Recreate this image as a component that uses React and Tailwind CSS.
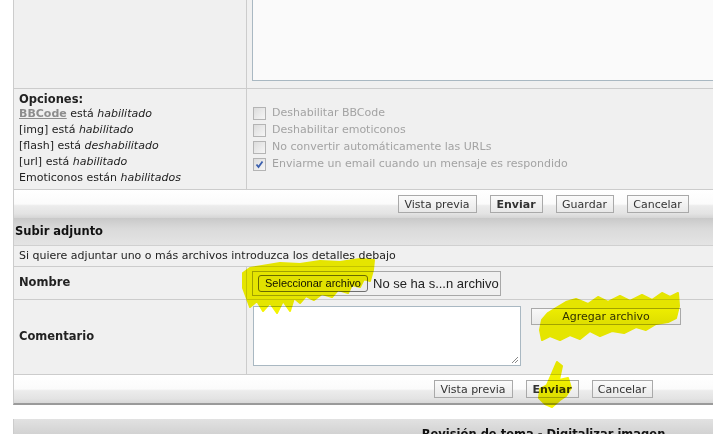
import React from 'react';

const Btn = ({ w, bold, children }) => (
  <button
    className={`${w} h-[18px] border border-[#a9a9a9] bg-[linear-gradient(#fbfbfb,#e8e8e8)] text-[11px] leading-none text-[#333] ${bold ? 'font-bold' : ''}`}
  >
    {children}
  </button>
);

const Check = ({ checked, children }) => (
  <div className="flex h-[17px] items-center gap-[6px]">
    <span className="relative h-[13px] w-[13px] shrink-0 border border-[#b4b4b4] bg-[linear-gradient(135deg,#dcdcdc,#f6f6f6)]">
      {checked && (
        <svg viewBox="0 0 11 11" className="absolute inset-0 h-[11px] w-[11px]">
          <path d="M2.5 5.5 L4.5 8 L8.5 2.5" fill="none" stroke="#3a5fae" strokeWidth="1.8" />
        </svg>
      )}
    </span>
    <span className="text-[#a3a3a3]">{children}</span>
  </div>
);

const App = () => {
  return (
    <div className="relative h-[434px] w-[713px] overflow-hidden bg-white font-[Verdana,'DejaVu_Sans',sans-serif] text-[11px] text-[#333]">
      {/* posting panel */}
      <div className="-mt-[20px] ml-[13px] w-[1060px] border-x border-b-2 border-[#ccc] border-b-[#9a9a9a] bg-[#f0f0f0]">
        <div className="flex border-b border-[#ccc]">
          <div className="w-[233px] shrink-0 border-r border-[#ccc]" />
          <div className="flex-1 pb-[7px] pl-[5px] pt-[5px]">
            <div className="h-[96px] w-[900px] border border-[#a9b8c2] bg-[#fafafa]" />
          </div>
        </div>

        <div className="flex h-[101px] border-b border-[#ccc]">
          <div className="w-[233px] shrink-0 border-r border-[#ccc] pl-[5px] pt-[3px] leading-[16px] text-[#222]">
            <div className="text-[11.5px] font-bold leading-[14px]">Opciones:</div>
            <div>
              <span className="font-bold text-[#8d8d8d] underline">BBCode</span> está <i>habilitado</i>
            </div>
            <div>[img] está <i>habilitado</i></div>
            <div>[flash] está <i>deshabilitado</i></div>
            <div>[url] está <i>habilitado</i></div>
            <div>Emoticonos están <i>habilitados</i></div>
          </div>
          <div className="flex-1 pl-[6px] pt-[16px]">
            <Check>Deshabilitar BBCode</Check>
            <Check>Deshabilitar emoticonos</Check>
            <Check>No convertir automáticamente las URLs</Check>
            <Check checked>Enviarme un email cuando un mensaje es respondido</Check>
          </div>
        </div>

        <div className="flex h-[28px] justify-center gap-[13px] bg-[linear-gradient(#ffffff,#fbfbfb_50%,#ececec_56%,#e3e3e3_85%,#d5d5d5)] pt-[5px]">
          <Btn w="w-[79px]">Vista previa</Btn>
          <Btn w="w-[53px]" bold>Enviar</Btn>
          <Btn w="w-[58px]">Guardar</Btn>
          <Btn w="w-[62px]">Cancelar</Btn>
        </div>

        <div className="flex h-[28px] items-center border-b border-[#d0d0d0] bg-[linear-gradient(#c9c9c9,#dadada_40%,#e4e4e4)] pl-[1px] pt-[1px] text-[11.5px] font-bold text-[#111]">
          Subir adjunto
        </div>

        <div className="flex h-[21px] items-center border-b border-[#ccc] pl-[5px] text-[#222]">
          Si quiere adjuntar uno o más archivos introduzca los detalles debajo
        </div>

        <div className="flex h-[33px] border-b border-[#ccc]">
          <div className="flex w-[233px] shrink-0 items-center border-r border-[#ccc] pl-[5px] text-[11.5px] font-bold text-[#222]">
            Nombre
          </div>
          <div className="flex-1 pl-[5px] pt-[4px]">
            <div className="flex h-[25px] w-[249px] items-center gap-[5px] border border-[#a8a8a8] pl-[5px] font-['Liberation_Sans',Arial,sans-serif]">
              <span className="flex h-[17px] w-[110px] items-center justify-center rounded-[3px] border border-[#6f6f6f] bg-[#ececec] text-[11px] text-[#111]">
                Seleccionar archivo
              </span>
              <span className="text-[13px] text-[#222]">No se ha s...n archivo</span>
            </div>
          </div>
        </div>

        <div className="flex h-[75px] border-b border-[#ccc]">
          <div className="flex w-[233px] shrink-0 items-center border-r border-[#ccc] pl-[5px] text-[11.5px] font-bold text-[#222]">
            Comentario
          </div>
          <div className="flex flex-1 items-start gap-[10px] pl-[6px] pt-[6px]">
            <div className="relative h-[60px] w-[268px] border border-[#a9b8c2] bg-white">
              <svg viewBox="0 0 8 8" className="absolute bottom-[1px] right-[1px] h-[8px] w-[8px]">
                <path d="M7 1 L1 7 M7 4 L4 7" stroke="#888" strokeWidth="1" />
              </svg>
            </div>
            <button className="mt-[2px] h-[17px] w-[150px] border border-[#a9a9a9] bg-[linear-gradient(#f8f8f8,#e9e9e9)] text-[11px] leading-none text-[#333]">
              Agregar archivo
            </button>
          </div>
        </div>

        <div className="flex h-[28px] justify-center gap-[13px] bg-[linear-gradient(#ffffff,#fbfbfb_50%,#ececec_56%,#e3e3e3_85%,#d8d8d8)] pt-[5px]">
          <Btn w="w-[79px]">Vista previa</Btn>
          <Btn w="w-[53px]" bold>Enviar</Btn>
          <Btn w="w-[61px]">Cancelar</Btn>
        </div>
      </div>

      {/* topic review panel */}
      <div className="ml-[13px] mt-[14px] w-[1060px] border-l border-[#ccc]">
        <div className="h-[30px] bg-[linear-gradient(#e2e2e2,#d2d2d2_50%,#d8d8d8)] pt-[7px] text-center text-[11.5px] font-bold leading-[16px] text-[#111]">
          Revisión de tema - Digitalizar imagen
        </div>
      </div>

      {/* highlighter marks */}
      <svg className="pointer-events-none absolute inset-0 mix-blend-multiply" width="713" height="434">
        <g fill="#f4f400" stroke="#f4f400" strokeWidth="2" strokeLinejoin="round">
          <path d="M243 273 L250 268 L262 266 L280 263 L300 264 L320 261 L340 262 L360 259 L374 260 L373 270 L370 281 L364 279 L360 287 L352 285 L348 293 L338 290 L332 297 L322 294 L314 300 L306 296 L300 303 L294 298 L290 311 L283 301 L277 313 L270 303 L263 311 L257 301 L250 307 L246 296 L243 288 Z" />
          <path d="M542 320 L548 313 L556 308 L566 302 L576 299 L588 304 L598 297 L608 302 L620 296 L630 301 L642 295 L652 300 L662 293 L670 297 L678 293 L679 306 L676 318 L668 322 L656 324 L646 330 L636 327 L624 333 L612 331 L600 336 L590 331 L580 339 L570 335 L560 340 L550 336 L542 340 L540 330 Z" />
          <path d="M557 362 L562 366 L559 380 L568 378 L571 388 L566 396 L560 400 L552 407 L545 404 L539 398 L540 389 L547 385 L551 376 Z" />
        </g>
      </svg>
    </div>
  );
};

export default App;
